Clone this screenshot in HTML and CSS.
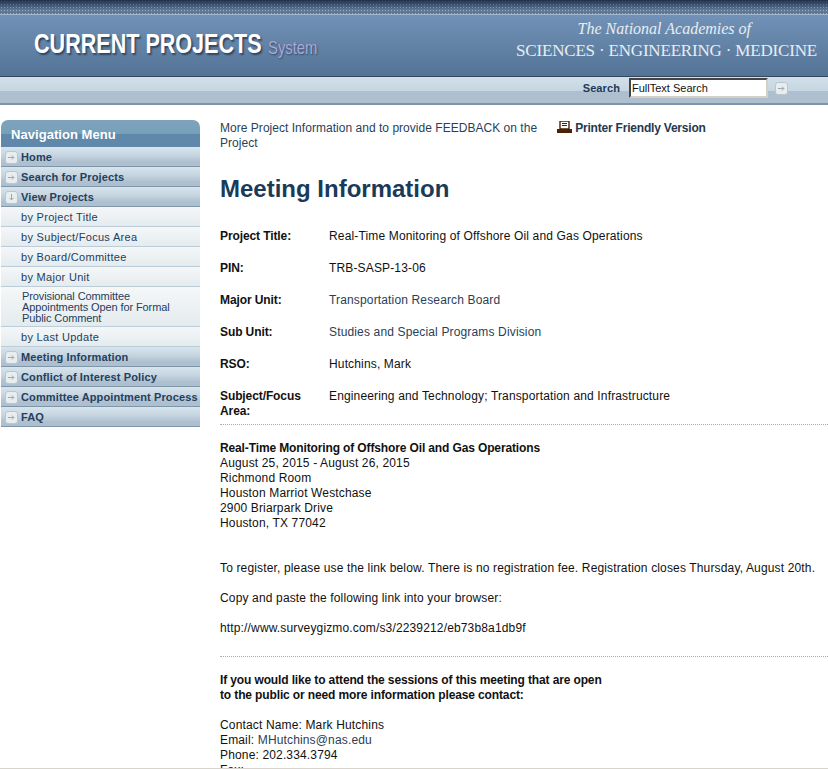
FILE: index.html
```html
<!DOCTYPE html>
<html lang="en">
<head>
    <meta charset="UTF-8">
    <meta name="viewport" content="width=device-width, initial-scale=1.0">
    <title>Meeting Information</title>
    <link rel="stylesheet" href="styles.css">
</head>
<body>
    <div class="dots"></div>
    <div class="banner">
        <div class="logo"><span class="logo-big">CURRENT PROJECTS</span> <span class="logo-small">System</span></div>
        <div class="nas">
            <div class="nas-top">The National Academies of</div>
            <div class="nas-bottom">SCIENCES · ENGINEERING · MEDICINE</div>
        </div>
    </div>
    <div class="searchbar">
        <span class="search-label">Search</span>
        <input class="search-input" type="text" value="FullText Search">
        <span class="arrow search-go"><svg width="9" height="7" viewBox="0 0 9 7"><path d="M0 3.500h7M5 1l2.500 2.500L5 6" fill="none" stroke="#8b949c" stroke-width="1"/></svg></span>
    </div>
    <div class="page">
        <div class="nav">
            <div class="nav-title">Navigation Menu</div>
            <a class="nav-main"><span class="arrow"><svg width="9" height="7" viewBox="0 0 9 7"><path d="M0 3.500h7M5 1l2.500 2.500L5 6" fill="none" stroke="#8b949c"/></svg></span>Home</a>
            <a class="nav-main"><span class="arrow"><svg width="9" height="7" viewBox="0 0 9 7"><path d="M0 3.500h7M5 1l2.500 2.500L5 6" fill="none" stroke="#8b949c"/></svg></span>Search for Projects</a>
            <a class="nav-main"><span class="arrow"><svg width="7" height="9" viewBox="0 0 7 9"><path d="M3.500 0v7M1 5l2.500 2.500L6 5" fill="none" stroke="#8b949c"/></svg></span>View Projects</a>
            <a class="nav-sub">by Project Title</a>
            <a class="nav-sub">by Subject/Focus Area</a>
            <a class="nav-sub">by Board/Committee</a>
            <a class="nav-sub">by Major Unit</a>
            <a class="nav-sub nav-long">Provisional Committee Appointments Open for Formal Public Comment</a>
            <a class="nav-sub">by Last Update</a>
            <a class="nav-main"><span class="arrow"><svg width="9" height="7" viewBox="0 0 9 7"><path d="M0 3.500h7M5 1l2.500 2.500L5 6" fill="none" stroke="#8b949c"/></svg></span>Meeting Information</a>
            <a class="nav-main"><span class="arrow"><svg width="9" height="7" viewBox="0 0 9 7"><path d="M0 3.500h7M5 1l2.500 2.500L5 6" fill="none" stroke="#8b949c"/></svg></span>Conflict of Interest Policy</a>
            <a class="nav-main"><span class="arrow"><svg width="9" height="7" viewBox="0 0 9 7"><path d="M0 3.500h7M5 1l2.500 2.500L5 6" fill="none" stroke="#8b949c"/></svg></span>Committee Appointment Process</a>
            <a class="nav-main"><span class="arrow"><svg width="9" height="7" viewBox="0 0 9 7"><path d="M0 3.500h7M5 1l2.500 2.500L5 6" fill="none" stroke="#8b949c"/></svg></span>FAQ</a>
        </div>
        <div class="content">
            <div class="toplinks">
                <a class="more">More Project Information and to provide FEEDBACK on the Project</a>
                <a class="printer"><svg width="15" height="12" viewBox="0 0 15 12"><path d="M3 0h9v8H3z" fill="#fff" stroke="#4a2208" stroke-width="1.400"/><path d="M5 2.500h5M5 4.500h5" stroke="#4a2208"/><path d="M0 8h15v4H0z" fill="#4a2208"/></svg> Printer Friendly Version</a>
            </div>
            <h1>Meeting Information</h1>
            <table class="info">
                <tr><th>Project Title:</th><td>Real-Time Monitoring of Offshore Oil and Gas Operations</td></tr>
                <tr><th>PIN:</th><td>TRB-SASP-13-06</td></tr>
                <tr><th>Major Unit:</th><td class="link">Transportation Research Board</td></tr>
                <tr><th>Sub Unit:</th><td class="link">Studies and Special Programs Division</td></tr>
                <tr><th>RSO:</th><td>Hutchins, Mark</td></tr>
                <tr><th>Subject/Focus Area:</th><td>Engineering and Technology; Transportation and Infrastructure</td></tr>
            </table>
            <div class="section first">
                <b>Real-Time Monitoring of Offshore Oil and Gas Operations</b><br>
                August 25, 2015 - August 26, 2015<br>
                Richmond Room<br>
                Houston Marriot Westchase<br>
                2900 Briarpark Drive<br>
                Houston, TX 77042<br>
                <br><br>
                To register, please use the link below. There is no registration fee. Registration closes Thursday, August 20th.<br>
                <br>
                Copy and paste the following link into your browser:<br>
                <br>
                http://www.surveygizmo.com/s3/2239212/eb73b8a1db9f
            </div>
            <div class="section">
                <b>If you would like to attend the sessions of this meeting that are open<br>
                to the public or need more information please contact:</b><br>
                <br>
                Contact Name: Mark Hutchins<br>
                Email: <span class="link">MHutchins@nas.edu</span><br>
                Phone: 202.334.3794<br>
                Fax:
            </div>
        </div>
    </div>
</body>
</html>
```

FILE: styles.css
```css
html, body {
    height: 769px;
    overflow: hidden;
}
body {
    margin: 0;
    background-color: #fff;
    font-family: "Liberation Sans", Arial, sans-serif;
    font-size: 12px;
    line-height: 15px;
    color: #111;
    letter-spacing: .15px;
    border-bottom: 1px solid #d8d4cc;
    box-sizing: border-box;
}
b {
    letter-spacing: -.13px;
}
.dots {
    height: 14px;
    background-color: #5d7796;
    background-image:
        linear-gradient(to bottom, rgba(20, 35, 60, .85), rgba(20, 35, 60, 0) 70%),
        radial-gradient(circle, #9fb2c6 .7px, transparent 1px);
    background-size: 100% 100%, 3px 3px;
}
.banner {
    height: 63px;
    display: flex;
    justify-content: space-between;
    background: linear-gradient(to bottom, #7192b6, #547496);
    border-top: 1px solid #a4b8cc;
    border-bottom: 1px solid #33485e;
    box-sizing: border-box;
    overflow: hidden;
}
.logo {
    padding: 13px 0 0 34px;
    color: #fff;
    font-family: "Liberation Sans", Arial, sans-serif;
    font-weight: bold;
    white-space: nowrap;
    line-height: 32px;
    letter-spacing: 0;
}
.logo-big {
    display: inline-block;
    font-size: 28px;
    transform: scaleX(.77);
    transform-origin: left;
    width: 230px;
    text-shadow: 2px 2px 2px #2f4560;
}
.logo-small {
    display: inline-block;
    font-size: 19px;
    font-weight: normal;
    color: #a9a9d6;
    transform: translateY(1px) scaleX(.78);
    transform-origin: left;
    margin-left: 1px;
    text-shadow: 1px 1px 2px #2f4560;
}
.nas {
    padding: 3px 11px 0 0;
    color: #e8edf2;
    font-family: "Liberation Serif", "Times New Roman", serif;
    text-align: right;
    letter-spacing: 0;
}
.nas-top {
    font-size: 16px;
    font-style: italic;
    line-height: 22px;
    margin-right: 66px;
}
.nas-bottom {
    font-size: 17px;
    line-height: 22px;
    letter-spacing: -.18px;
    white-space: nowrap;
}
.searchbar {
    height: 28px;
    display: flex;
    align-items: center;
    justify-content: flex-end;
    padding: 0 40px 4px 0;
    box-sizing: border-box;
    background: linear-gradient(to bottom, #d1e0e9 0, #c6d6e1 14px, #aebfcf 14px, #aebfcf 100%);
    border-bottom: 2px solid #7f93ab;
}
.search-label {
    font-size: 11px;
    font-weight: bold;
    color: #1c3a5a;
    letter-spacing: .1px;
    margin-right: 9px;
}
.search-input {
    width: 139px;
    height: 20px;
    padding: 0 1px;
    box-sizing: border-box;
    font-family: "Liberation Sans", Arial, sans-serif;
    font-size: 11px;
    color: #111;
    background: #fff;
    border: 2px solid;
    border-color: #444 #d4d0c8 #d4d0c8 #444;
    margin-right: 7px;
}
.arrow {
    display: flex;
    align-items: center;
    justify-content: center;
    width: 11px;
    height: 11px;
    flex: none;
    background: #e8edf0;
    border: 1px solid #bcc5cc;
    border-radius: 3px;
}
.arrow svg {
    transform: scale(.8);
}
.page {
    display: flex;
    align-items: flex-start;
}
.nav {
    width: 199px;
    margin: 15px 0 0 1px;
    flex: none;
}
.nav-title {
    height: 27px;
    padding-left: 10px;
    border-radius: 7px 7px 0 0;
    background: linear-gradient(to bottom, #7ea3bc 0, #76a0b9 14px, #6088ab 14px, #6088ab 100%);
    color: #fff;
    font-size: 13px;
    font-weight: bold;
    line-height: 30px;
    letter-spacing: .05px;
}
.nav-main {
    display: flex;
    align-items: center;
    gap: 3px;
    height: 20px;
    padding: 1px 0 0 4px;
    box-sizing: border-box;
    background: linear-gradient(to bottom, #d6e5ee 0, #c6d6e1 8px, #aebfcf 15px, #aebfcf 100%);
    border-bottom: 1px solid #7f96a8;
    color: #23405c;
    font-size: 11px;
    font-weight: bold;
    letter-spacing: .12px;
    white-space: nowrap;
}
.nav-sub {
    display: block;
    padding: 3px 10px 2px 20px;
    line-height: 15px;
    height: 20px;
    box-sizing: border-box;
    background: linear-gradient(to bottom, #f5f7f8, #e4ebee);
    border-bottom: 1px solid #bcccd9;
    color: #23405c;
    font-size: 11px;
    letter-spacing: .3px;
}
.nav-long {
    height: 40px;
    padding: 4px 10px 2px 21px;
    line-height: 11px;
    letter-spacing: -.1px;
}
.content {
    width: 608px;
    margin-left: 20px;
    padding-top: 16px;
}
.toplinks {
    display: flex;
    align-items: flex-start;
}
.more {
    width: 337px;
    color: #2a3f58;
    letter-spacing: .03px;
}
.printer {
    font-weight: bold;
    color: #24384e;
    white-space: nowrap;
    letter-spacing: -.2px;
}
.printer svg {
    vertical-align: -1px;
}
h1 {
    margin: 22px 0 0;
    font-size: 24px;
    line-height: 32px;
    color: #1a3b58;
    letter-spacing: 0;
}
.info {
    border-collapse: collapse;
    margin-top: 15px;
}
.info th {
    width: 109px;
    padding: 8.500px 0;
    box-sizing: border-box;
    text-align: left;
    vertical-align: top;
    font-weight: bold;
    color: #111;
    letter-spacing: -.1px;
}
.info tr:last-child th {
    padding: 8.500px 20px 5.500px 0;
}
.info td {
    padding: 8.500px 0;
    vertical-align: top;
}
.info tr:last-child td {
    padding-bottom: 5.500px;
}
.link {
    color: #2a4058;
}
.section {
    border-top: 1px dotted #aaa;
    padding-top: 16px;
    margin-bottom: 20px;
}
```
